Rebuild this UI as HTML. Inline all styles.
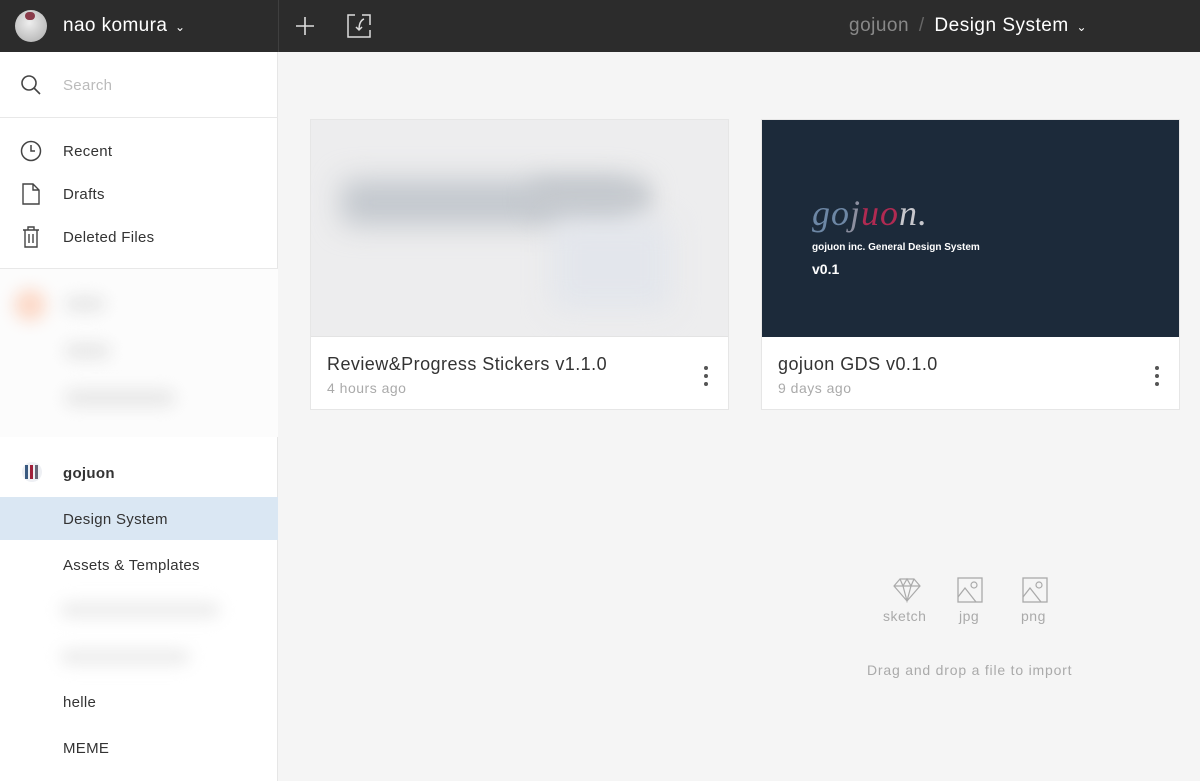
<!DOCTYPE html>
<html><head><meta charset="utf-8"><style>
*{margin:0;padding:0;box-sizing:border-box}
body{width:1200px;height:781px;overflow:hidden;font-family:"Liberation Sans",sans-serif;background:#f5f5f5;position:relative}
.top{position:absolute;left:0;top:0;width:1200px;height:52px;background:#2c2c2c}
.sep{position:absolute;left:278px;top:0;width:1px;height:52px;background:#3f3f3f}
.side{position:absolute;left:0;top:52px;width:278px;height:729px;background:#fff;border-right:1px solid #e6e6e6}
.t{position:absolute;white-space:nowrap}
.item{position:absolute;left:63px;font-size:15px;color:#333;letter-spacing:0.3px}
.hr{position:absolute;left:0;width:278px;height:1px;background:#e8e8e8}
.blur{position:absolute;filter:blur(8px);border-radius:10px}
.card{position:absolute;top:119px;width:419px;height:291px;background:#fff;border:1px solid #e6e6e6}
.dots{position:absolute;right:20px;top:246px;width:4px}
.dots i{display:block;width:4px;height:4px;border-radius:50%;background:#555;margin-bottom:4px}
</style></head><body>
<div class="top"></div>
<div class="sep"></div>
<div style="position:absolute;left:15px;top:10px;width:32px;height:32px;border-radius:50%;background:radial-gradient(circle at 45% 40%,#eee,#aaa)"></div>
<div style="position:absolute;left:25px;top:12px;width:10px;height:8px;background:#8a3b4a;border-radius:4px"></div>
<div class="t" style="left:63px;top:15px;font-size:19px;color:#fff;letter-spacing:0.4px">nao komura <span style="font-size:12px;margin-left:2px">⌄</span></div>
<svg style="position:absolute;left:294px;top:15px" width="22" height="22"><path d="M11 2V20M2 11H20" stroke="#ddd" stroke-width="1.6"/></svg>
<svg style="position:absolute;left:346px;top:13px" width="26" height="26"><path d="M9 2H2V24H24V17M24 12V2H16" stroke="#ddd" stroke-width="1.5" fill="none"/><path d="M18 6Q13 8 13 17M10 14L13 17L16 14" stroke="#ddd" stroke-width="1.5" fill="none"/></svg>
<div class="t" style="left:849px;top:15px;font-size:19px;color:#888;letter-spacing:0.5px">gojuon <span style="color:#666;margin:0 4px">/</span> <span style="color:#fff">Design System</span> <span style="color:#fff;font-size:12px;margin-left:2px">⌄</span></div>

<div class="side">
<svg style="position:absolute;left:20px;top:22px" width="22" height="22"><circle cx="9" cy="9" r="7" stroke="#444" stroke-width="1.6" fill="none"/><path d="M14 14L20 20" stroke="#444" stroke-width="1.6"/></svg>
<div class="t" style="left:63px;top:25px;font-size:15px;color:#bbb;letter-spacing:0.3px">Search</div>
<div class="hr" style="top:65px"></div>
<svg style="position:absolute;left:20px;top:88px" width="22" height="22"><circle cx="11" cy="11" r="9.5" stroke="#444" stroke-width="1.5" fill="none"/><path d="M11 5V11H15" stroke="#444" stroke-width="1.5" fill="none"/></svg>
<div class="item" style="top:91px">Recent</div>
<svg style="position:absolute;left:22px;top:131px" width="18" height="22"><path d="M1 1H11L17 7V21H1Z M11 1V7H17" stroke="#444" stroke-width="1.4" fill="none"/></svg>
<div class="item" style="top:134px">Drafts</div>
<svg style="position:absolute;left:22px;top:174px" width="18" height="22"><path d="M1 4H17M6 4V1H12V4M3 4V21H15V4M7 8V17M11 8V17" stroke="#444" stroke-width="1.4" fill="none"/></svg>
<div class="item" style="top:177px">Deleted Files</div>
<div class="hr" style="top:216px"></div>
<div style="position:absolute;left:0;top:217px;width:278px;height:168px;background:#fcfcfc"></div>
<div class="blur" style="left:14px;top:237px;width:32px;height:32px;border-radius:50%;background:#fcd9c8"></div>
<div class="blur" style="left:65px;top:245px;width:40px;height:14px;background:#e4e4e4"></div>
<div class="blur" style="left:65px;top:292px;width:45px;height:14px;background:#e4e4e4"></div>
<div class="blur" style="left:65px;top:338px;width:110px;height:16px;background:#e6e6e6"></div>
<div style="position:absolute;left:22px;top:410px;width:20px;height:20px;border-radius:50%;background:#eef0f4"></div>
<div style="position:absolute;left:25px;top:413px;width:3px;height:14px;background:#3a5a80"></div>
<div style="position:absolute;left:30px;top:413px;width:3px;height:14px;background:#a0203a"></div>
<div style="position:absolute;left:35px;top:413px;width:3px;height:14px;background:#667"></div>
<div class="t" style="left:63px;top:413px;font-size:15px;font-weight:bold;color:#333;letter-spacing:0.3px">gojuon</div>
<div style="position:absolute;left:0;top:445px;width:278px;height:43px;background:#dae7f3"></div>
<div class="item" style="top:459px">Design System</div>
<div class="item" style="top:505px">Assets &amp; Templates</div>
<div class="blur" style="left:60px;top:550px;width:160px;height:16px;background:#ececec"></div>
<div class="blur" style="left:60px;top:597px;width:130px;height:16px;background:#ececec"></div>
<div class="item" style="top:642px">helle</div>
<div class="item" style="top:688px">MEME</div>
</div>

<div class="card" style="left:310px">
<div style="position:absolute;left:0;top:0;width:417px;height:217px;background:#ededee;overflow:hidden">
<div class="blur" style="left:30px;top:60px;width:290px;height:45px;background:#c2c7cd;filter:blur(14px)"></div>
<div class="blur" style="left:220px;top:60px;width:120px;height:35px;background:#c5c9ce;filter:blur(12px)"></div>
<div class="blur" style="left:240px;top:100px;width:120px;height:90px;background:#e3e6ec;filter:blur(14px)"></div>
</div>
<div style="position:absolute;left:0;top:216px;width:417px;height:1px;background:#e3e3e3"></div>
<div class="t" style="left:16px;top:234px;font-size:18px;color:#333;letter-spacing:0.45px">Review&amp;Progress Stickers v1.1.0</div>
<div class="t" style="left:16px;top:260px;font-size:14px;color:#aaa;letter-spacing:0.5px">4 hours ago</div>
<div class="dots"><i></i><i></i><i></i></div>
</div>

<div class="card" style="left:761px">
<div style="position:absolute;left:0;top:0;width:417px;height:217px;background:#1c2a3a">
<div class="t" style="left:50px;top:72px;font-size:36px;font-family:'Liberation Serif',serif;font-style:italic;color:#6d87a5;letter-spacing:1px">go<span style="color:#8c8fa0">j</span><span style="color:#b02a52">uo</span><span style="color:#c7c7cc">n.</span></div>
<div class="t" style="left:50px;top:122px;font-size:10px;font-weight:bold;color:#fff">gojuon inc. General Design System</div>
<div class="t" style="left:50px;top:141px;font-size:14px;font-weight:bold;color:#fff">v0.1</div>
</div>
<div class="t" style="left:16px;top:234px;font-size:18px;color:#333;letter-spacing:0.45px">gojuon GDS v0.1.0</div>
<div class="t" style="left:16px;top:260px;font-size:14px;color:#aaa;letter-spacing:0.5px">9 days ago</div>
<div class="dots"><i></i><i></i><i></i></div>
</div>

<svg style="position:absolute;left:892px;top:577px" width="30" height="26"><path d="M8 2H22L28 9L15 24L2 9Z M2 9H28 M8 2L11 9L15 24L19 9L22 2 M11 9L15 2L19 9" stroke="#aaa" stroke-width="1.2" fill="none"/></svg>
<svg style="position:absolute;left:957px;top:577px" width="26" height="26"><rect x="1" y="1" width="24" height="24" stroke="#aaa" stroke-width="1.3" fill="none"/><circle cx="17" cy="8" r="3" stroke="#aaa" stroke-width="1.2" fill="none"/><path d="M1 20L8 11L19 25" stroke="#aaa" stroke-width="1.3" fill="none"/></svg>
<svg style="position:absolute;left:1022px;top:577px" width="26" height="26"><rect x="1" y="1" width="24" height="24" stroke="#aaa" stroke-width="1.3" fill="none"/><circle cx="17" cy="8" r="3" stroke="#aaa" stroke-width="1.2" fill="none"/><path d="M1 20L8 11L19 25" stroke="#aaa" stroke-width="1.3" fill="none"/></svg>
<div class="t" style="left:883px;top:608px;font-size:14px;color:#aaa;letter-spacing:0.5px">sketch</div>
<div class="t" style="left:959px;top:608px;font-size:14px;color:#aaa;letter-spacing:0.5px">jpg</div>
<div class="t" style="left:1021px;top:608px;font-size:14px;color:#aaa;letter-spacing:0.5px">png</div>
<div class="t" style="left:867px;top:662px;font-size:14px;color:#aaa;letter-spacing:0.8px">Drag and drop a file to import</div>
</body></html>
